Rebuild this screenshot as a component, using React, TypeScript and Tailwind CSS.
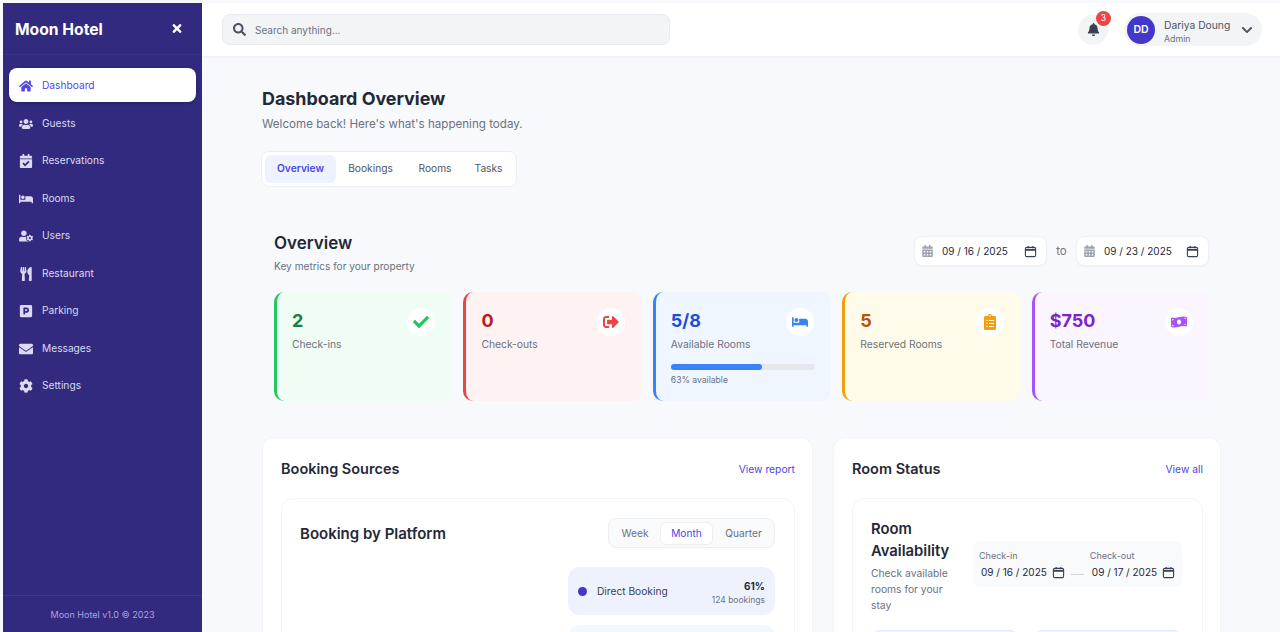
import React from "react";
import { FaHome, FaUsers, FaCalendarCheck, FaBed, FaUserCog, FaUtensils, FaParking, FaEnvelope, FaCog, FaTimes, FaSearch, FaBell, FaChevronDown, FaCheck, FaSignOutAlt, FaClipboardList, FaMoneyBillWave, FaCalendarAlt } from "react-icons/fa";

const nav = [
  [FaHome, "Dashboard"],
  [FaUsers, "Guests"],
  [FaCalendarCheck, "Reservations"],
  [FaBed, "Rooms"],
  [FaUserCog, "Users"],
  [FaUtensils, "Restaurant"],
  [FaParking, "Parking"],
  [FaEnvelope, "Messages"],
  [FaCog, "Settings"],
] as const;

function CalIcon({ className = "" }: { className?: string }) {
  return (
    <svg viewBox="0 0 14 14" className={className} fill="none" stroke="#374151" strokeWidth="1.2">
      <rect x="1.5" y="2.5" width="11" height="10" rx="1.5" />
      <path d="M1.5 5.2h11" strokeWidth="2" />
      <path d="M4.5 1v2.5M9.5 1v2.5" />
    </svg>
  );
}

function DateBox({ value, w }: { value: string; w: string }) {
  return (
    <div className={`${w} h-[30px] bg-white rounded-lg border border-[#f0f1f4] flex items-center pl-[7px] pr-[9px] text-[10px] text-[#1f2937] shadow-[0_1px_2px_rgba(0,0,0,0.03)]`}>
      <FaCalendarAlt className="text-[#9ca3af] w-[11px] h-[12px]" />
      <span className="ml-[9px] flex-1 whitespace-nowrap pt-[1px]">{value}</span>
      <CalIcon className="w-[13px] h-[13px]" />
    </div>
  );
}

function Stat({ border, bg, valueColor, iconColor, Icon, value, label, children }: any) {
  return (
    <div className={`flex-1 h-[109px] rounded-[10px] border-l-[3px] ${border} ${bg} pl-[15px] pr-[17px] pt-[16px] relative`}>
      <div className="flex justify-between">
        <div>
          <div className={`text-[18px] leading-[26px] font-bold ${valueColor}`}>{value}</div>
          <div className="text-[10.3px] leading-[20px] text-[#6b7280]">{label}</div>
        </div>
        <div className={`w-[28px] h-[28px] rounded-full bg-white flex items-center justify-center ${iconColor}`}>
          <Icon className="w-[16px] h-[16px]" />
        </div>
      </div>
      {children}
    </div>
  );
}

export default function App() {
  return (
    <div className="h-[632px] w-[1280px] overflow-hidden flex flex-col bg-[#f8f9fc] pt-[3px] pl-[3px] [font-family:Inter,'Noto_Sans',sans-serif]">
      <div className="flex flex-1 min-h-0">
        <aside className="w-[199px] shrink-0 bg-[#312a7e] flex flex-col">
          <div className="h-[52px] flex items-center justify-between pl-[12px] pr-[19px] border-b border-[#3a3387]">
            <span className="text-white font-bold text-[15.7px] mt-[2px]">Moon Hotel</span>
            <FaTimes className="text-white w-[12px] h-[13px]" />
          </div>
          <nav className="flex-1 pt-[13px] px-[6px]">
            {nav.map(([Icon, label], i) => (
              <div
                key={label}
                className={i === 0
                  ? "h-[34px] mb-[3.5px] pt-[2px] rounded-lg bg-white flex items-center pl-[10px] text-[#4f46e5] shadow-[0_1px_3px_rgba(0,0,0,0.3)]"
                  : "h-[34px] mb-[3.5px] pt-[2px] flex items-center pl-[10px] text-[#dcdaf3]"}
              >
                <span className="w-[14px] h-[14px] flex items-center justify-center"><Icon className="w-[14px] h-[14px]" /></span>
                <span className="ml-[9px] text-[10.2px]">{label}</span>
              </div>
            ))}
          </nav>
          <div className="h-[37px] pt-[2px] border-t border-[#3f3889] flex items-center justify-center text-[9px] text-[#a9a5e4]">Moon Hotel v1.0 © 2023</div>
        </aside>
        <div className="flex-1 min-w-0 flex flex-col">
          <header className="h-[53px] shrink-0 bg-white flex items-center justify-between pl-[20px] pr-[18px] shadow-[0_1px_3px_rgba(0,0,0,0.05)]">
            <div className="w-[448px] h-[31px] rounded-lg bg-[#f3f4f6] border border-[#e9eaee] flex items-center pl-[10px] text-[10px] text-[#6b7280]">
              <FaSearch className="w-[13px] h-[13px] text-[#4b5563]" />
              <span className="ml-[9px] pt-[2px]">Search anything...</span>
            </div>
            <div className="flex items-center">
              <div className="relative w-[30px] h-[30px] rounded-full bg-[#f3f4f6] flex items-center justify-center mr-[16px]">
                <FaBell className="w-[13px] h-[13px] text-[#374151]" />
                <span className="absolute -top-[4px] -right-[3px] w-[15px] h-[15px] rounded-full bg-[#ef4444] text-white text-[8.5px] flex items-center justify-center">3</span>
              </div>
              <div className="w-[138px] h-[33px] rounded-full bg-[#f3f4f6] flex items-center pl-[3px] pr-[9px]">
                <div className="w-[28px] h-[28px] rounded-full bg-[#4338ca] text-white text-[10.5px] font-semibold flex items-center justify-center">DD</div>
                <div className="ml-[9px] flex-1 pt-[3px]">
                  <div className="text-[10.3px] leading-[14px] text-[#4b5563]">Dariya Doung</div>
                  <div className="text-[8.8px] leading-[13px] text-[#6b7280]">Admin</div>
                </div>
                <FaChevronDown className="w-[12px] h-[12px] text-[#4b5563]" />
              </div>
            </div>
          </header>
          <main className="flex-1 min-h-0 overflow-hidden pl-[60px] pr-[59px] pt-[29px]">
            <h1 className="text-[17.9px] leading-[28px] font-bold text-[#1f2937]">Dashboard Overview</h1>
            <p className="text-[11.6px] leading-[22px] text-[#6b7280]">Welcome back! Here's what's happening today.</p>
            <div className="mt-[16px] -ml-[1px] w-[256px] h-[36px] bg-white border border-[#eceef2] rounded-lg flex items-center px-[3px] text-[10.2px] text-[#4b5563]">
              <span className="h-[28px] w-[71px] rounded-md bg-[#eef2ff] text-[#4f46e5] font-semibold flex items-center justify-center">Overview</span>
              <span className="w-[69px] text-center">Bookings</span>
              <span className="w-[60px] text-center">Rooms</span>
              <span className="w-[47px] text-center">Tasks</span>
            </div>
            <section className="mt-[44px] ml-[12px] mr-[11px]">
              <div className="flex justify-between items-start h-[61px]">
                <div>
                  <h2 className="text-[17px] leading-[24px] font-semibold text-[#1f2937]">Overview</h2>
                  <p className="text-[10.15px] leading-[22px] text-[#6b7280]">Key metrics for your property</p>
                </div>
                <div className="flex items-center mt-[5px] mr-[1px]">
                  <DateBox value="09 / 16 / 2025" w="w-[133px]" />
                  <span className="w-[29px] pt-[2px] text-center text-[11.5px] text-[#6b7280]">to</span>
                  <DateBox value="09 / 23 / 2025" w="w-[133px]" />
                </div>
              </div>
              <div className="flex gap-[11px]">
                <Stat border="border-[#22c55e]" bg="bg-[#f0fdf4]" valueColor="text-[#15803d]" iconColor="text-[#22c55e]" Icon={FaCheck} value="2" label="Check-ins" />
                <Stat border="border-[#ef4444]" bg="bg-[#fef2f2]" valueColor="text-[#b91c1c]" iconColor="text-[#ef4444]" Icon={FaSignOutAlt} value="0" label="Check-outs" />
                <Stat border="border-[#3b82f6]" bg="bg-[#eff6ff]" valueColor="text-[#1d4ed8]" iconColor="text-[#3b82f6]" Icon={FaBed} value="5/8" label="Available Rooms">
                  <div className="mt-[10px] mr-[-1px] h-[6px] rounded-full bg-[#e5e7eb]"><div className="h-full w-[63%] rounded-full bg-[#3b82f6]" /></div>
                  <div className="text-[8.6px] leading-[16px] text-[#6b7280] mt-[2px]">63% available</div>
                </Stat>
                <Stat border="border-[#f59e0b]" bg="bg-[#fffbeb]" valueColor="text-[#b45309]" iconColor="text-[#f59e0b]" Icon={FaClipboardList} value="5" label="Reserved Rooms" />
                <Stat border="border-[#a855f7]" bg="bg-[#faf5ff]" valueColor="text-[#7e22ce]" iconColor="text-[#a855f7]" Icon={FaMoneyBillWave} value="$750" label="Total Revenue" />
              </div>
            </section>
            <div className="mt-[36px] flex gap-[20px] items-start">
              <div className="w-[551px] shrink-0 h-[400px] bg-white rounded-xl border border-[#f3f4f6] pt-[19px] pl-[18px] pr-[17px]">
                <div className="flex justify-between items-center h-[22px] mt-[1px]">
                  <h3 className="text-[14.5px] font-semibold text-[#1f2937]">Booking Sources</h3>
                  <span className="text-[10.3px] pt-[2px] text-[#4f46e5]">View report</span>
                </div>
                <div className="mt-[18px] h-[300px] rounded-xl border border-[#f3f4f6] pl-[18px] pr-[19px] pt-[19px]">
                  <div className="flex justify-between items-center">
                    <h4 className="text-[15px] pt-[2px] font-semibold text-[#1f2937]">Booking by Platform</h4>
                    <div className="h-[30px] w-[167px] rounded-lg bg-[#f9fafb] border border-[#eceef2] flex items-center px-[3px] text-[10.2px] text-[#6b7280]">
                      <span className="w-[46px] pt-[2px] text-center">Week</span>
                      <span className="w-[53px] ml-[2px] h-[23px] pt-[1px] rounded-md bg-white border border-[#eceef2] text-[#4f46e5] flex items-center justify-center">Month</span>
                      <span className="flex-1 pl-[3px] pt-[2px] text-center">Quarter</span>
                    </div>
                  </div>
                  <div className="ml-auto mt-[19px] w-[207px]">
                    <div className="h-[48px] rounded-xl bg-[#eef2ff] flex items-center px-[10px]">
                      <span className="w-[9px] h-[9px] rounded-full bg-[#4338ca]" />
                      <span className="ml-[10px] flex-1 pt-[2px] text-[10.2px] text-[#374151]">Direct Booking</span>
                      <div className="text-right pt-[4px]">
                        <div className="text-[10px] leading-[14px] font-bold text-[#1f2937]">61%</div>
                        <div className="text-[8.5px] leading-[14px] text-[#6b7280]">124 bookings</div>
                      </div>
                    </div>
                    <div className="h-[48px] rounded-xl bg-[#f0f9ff] mt-[10px]" />
                  </div>
                </div>
              </div>
              <div className="w-[388px] shrink-0 h-[400px] bg-white rounded-xl border border-[#f3f4f6] pt-[19px] pl-[18px] pr-[17px]">
                <div className="flex justify-between items-center h-[22px] mt-[1px]">
                  <h3 className="text-[14.5px] font-semibold text-[#1f2937]">Room Status</h3>
                  <span className="text-[10.3px] pt-[2px] text-[#4f46e5]">View all</span>
                </div>
                <div className="mt-[18px] h-[300px] rounded-xl border border-[#f3f4f6] pl-[18px] pr-[19px] pt-[19px]">
                  <div className="flex items-center">
                    <div className="w-[85px] mr-[17px] shrink-0">
                      <h4 className="text-[14.8px] leading-[22px] font-semibold text-[#1f2937]">Room Availability</h4>
                      <p className="text-[10.3px] leading-[16px] text-[#6b7280] mt-[3px]">Check available rooms for your stay</p>
                    </div>
                    <div className="w-[209px] shrink-0 h-[46px] mb-[3px] rounded-lg bg-[#f9fafb] flex px-[6px] pt-[9px]">
                      <div className="text-[9px] leading-[12px] text-[#6b7280]">
                        Check-in
                        <div className="flex items-center text-[10px] leading-[16px] text-[#1f2937] mt-[2px] pl-[2px] whitespace-nowrap">09 / 16 / 2025<CalIcon className="w-[13px] h-[13px] ml-[5px]" /></div>
                      </div>
                      <span className="self-center mt-[6px] mx-[6px] w-[13px] h-px bg-[#d1d5db] translate-y-[3px]" />
                      <div className="text-[9px] leading-[12px] text-[#6b7280]">
                        Check-out
                        <div className="flex items-center text-[10px] leading-[16px] text-[#1f2937] mt-[2px] pl-[2px] whitespace-nowrap">09 / 17 / 2025<CalIcon className="w-[13px] h-[13px] ml-[5px]" /></div>
                      </div>
                    </div>
                  </div>
                  <div className="flex gap-[17px] mt-[17px] ml-[1px]">
                    <div className="w-[146px] h-[40px] rounded-lg bg-[#eff6ff] border border-[#dbeafe]" />
                    <div className="w-[146px] h-[40px] rounded-lg bg-[#eff6ff] border border-[#dbeafe]" />
                  </div>
                </div>
              </div>
            </div>
          </main>
        </div>
      </div>
    </div>
  );
}
